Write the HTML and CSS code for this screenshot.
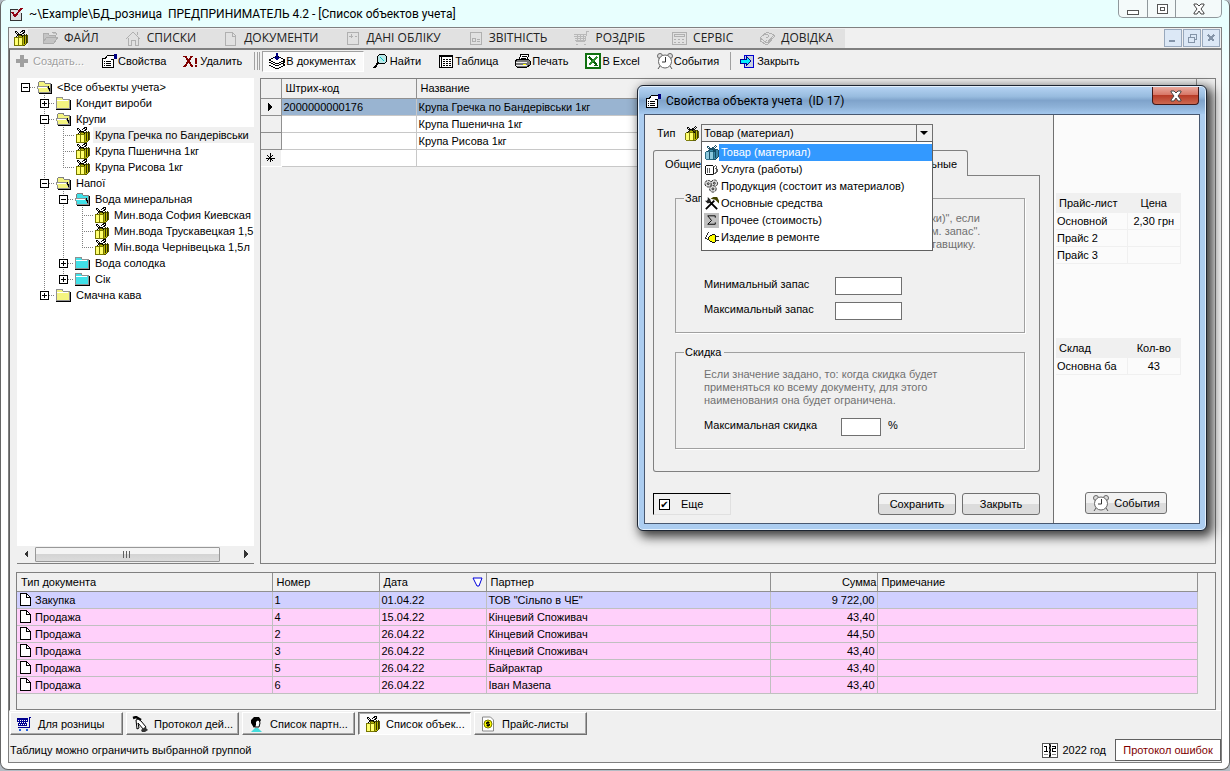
FILE: index.html
```html
<!DOCTYPE html>
<html lang="ru">
<head>
    <meta charset="UTF-8">
    <meta name="viewport" content="width=device-width, initial-scale=1.0">
    <title>ПРЕДПРИНИМАТЕЛЬ 4.2 - [Список объектов учета]</title>
    <link rel="stylesheet" href="styles.css">
</head>
<body>
    <!-- иконки -->
    <svg class="sprite" aria-hidden="true">
        <symbol id="app" viewBox="0 0 14 14">
            <path d="M1 2h11v11H1z" fill="#ddd"/><path d="M1 13V2h8M1 13h11V6" fill="none" stroke="#333"/>
            <path d="M3 5l3 4 7-8" fill="none" stroke="#900010" stroke-width="2"/>
        </symbol>
        <symbol id="gift" viewBox="0 0 16 16">
            <path d="M6 5h9v8l-2 2H6z" fill="#b8b800" stroke="#555500"/>
            <path d="M2 7h8v8H2z" fill="#ffff70" stroke="#777700"/>
            <path d="M10 7l3-3M12 5v9M14 4v9" stroke="#333300" fill="none"/>
            <path d="M6 7v8" stroke="#777700" stroke-width="1"/>
            <path d="M7 4L4 1 3 2l2 2h5l3-2-1-2-4 3M7 4L4 7M8 4l3 3" fill="none" stroke="#000"/>
        </symbol>
        <symbol id="gift-blue" viewBox="0 0 16 16">
            <path d="M6 5h9v8l-2 2H6z" fill="#3a88a8" stroke="#104860"/>
            <path d="M2 7h8v8H2z" fill="#8cc8dc" stroke="#206880"/>
            <path d="M10 7l3-3M12 5v9M6 7v8" stroke="#104860" fill="none"/>
            <path d="M7 4L4 1 3 2l2 2h5l3-2-1-2-4 3M7 4L4 7M8 4l3 3" fill="none" stroke="#104860"/>
        </symbol>
        <symbol id="folder" viewBox="0 0 16 14">
            <path d="M1 13h14M15 4v10" fill="none" stroke="#000"/>
            <path d="M1 12V3l1-2h5l1 2h6v9z" fill="currentColor" stroke="#909090"/><path d="M2 4h11" stroke="#fff"/>
        </symbol>
        <symbol id="folder-open" viewBox="0 0 16 14">
            <path d="M3 13h12M15 4v10" fill="none" stroke="#000"/>
            <path d="M2 12V3l2-2h4l1 2h5v9z" fill="currentColor" stroke="#808080"/>
            <path d="M3 12L1 6h10l3 6z" fill="currentColor" stroke="#909090"/><path d="M2 7h9" fill="none" stroke="#fff"/><path d="M12 6l2 5" stroke="#000"/>
        </symbol>
        <symbol id="m-file" viewBox="0 0 18 16">
            <path d="M2 12V3h5l1 2h6v3M2 12l4-5h11l-4 6H2zM11 3q4-2 5 2" fill="#c4c4c4" stroke="#adadad"/>
        </symbol>
        <symbol id="m-home" viewBox="0 0 18 16">
            <path d="M2 9l7-7 7 7M4 8v7h3v-5h4v5h3V8M13 5V2" fill="none" stroke="#b0b0b0"/>
        </symbol>
        <symbol id="m-doc" viewBox="0 0 18 16"><path d="M4 2h7l3 3v10H4zM11 2v4h3" fill="none" stroke="#b0b0b0"/></symbol>
        <symbol id="m-acc" viewBox="0 0 18 16"><path d="M4 2h11v12H4zM6 6h4M12 6h2M8 4v4" fill="none" stroke="#b0b0b0"/></symbol>
        <symbol id="m-rep" viewBox="0 0 18 16"><path d="M4 2h11v12H4zM6 8h3v3H6zM11 9h3M11 11h3" fill="none" stroke="#b0b0b0"/></symbol>
        <symbol id="m-cart" viewBox="0 0 18 16"><path d="M2 4h12M2 6h12M3 8h11M3 10h10M5 4v7M8 4v7M11 4v7M17 1h-2l-2 10H4M4 14h2M12 14h2" fill="none" stroke="#b8b8b8"/></symbol>
        <symbol id="m-calc" viewBox="0 0 18 16"><path d="M2 2h14v12H2zM4 4h10v2H4zM4 9h2M8 9h2M12 9h2M4 12h2M8 12h2M12 12h2" fill="none" stroke="#b0b0b0"/></symbol>
        <symbol id="m-help" viewBox="0 0 18 16"><path d="M2 8l7-6 7 3-7 8zM2 8v3l7 4 7-8V5M7 5q4-1 3 2l-2 1M8 10h1" fill="none" stroke="#b0b0b0"/></symbol>
        <symbol id="plus" viewBox="0 0 18 18"><path d="M5 3h4v4h4v4H9v4H5v-4H1V7h4z" fill="#a0a0a0"/></symbol>
        <symbol id="props" viewBox="0 0 18 18">
            <path d="M2 6h11v9H2z" fill="#fff" stroke="#000"/><path d="M4 9h1M6 9h5M4 11h1M6 11h5M4 13h1M6 13h5" stroke="#000"/>
            <path d="M5 7l3-4h3l3 1v3l-3 1" fill="#fff" stroke="#000"/><path d="M14 2h3v5h-3z" fill="#000080"/>
        </symbol>
        <symbol id="del" viewBox="0 0 18 18">
            <path d="M3 4l7 10M10 4L3 14" stroke="#800000" stroke-width="2"/><path d="M1 4h3M8 4h3M1 14h3M9 14h2" stroke="#800000"/><path d="M13 6h2v6h-2zM13 13h2v2h-2z" fill="#800000"/>
        </symbol>
        <symbol id="stack" viewBox="0 0 18 18">
            <path d="M1 13l8 4 8-4-3-2M1 10l8 4 8-4-3-2" fill="#fff" stroke="#000"/><path d="M1 8l8-4 8 4-8 4z" fill="#fff" stroke="#000"/>
            <path d="M8 1h2v4h2l-3 4-3-4h2z" fill="#000080"/>
        </symbol>
        <symbol id="find" viewBox="0 0 18 18"><path d="M7 10l-5 6" stroke="#000" stroke-width="2"/><circle cx="10" cy="7" r="5" fill="#b8e8e8" stroke="#000"/><path d="M8 5l4 4" stroke="#0cc"/></symbol>
        <symbol id="grid" viewBox="0 0 18 18">
            <path d="M2 3h13v12H2z" fill="#fff" stroke="#000"/><path d="M2 4h13M4 3v12" stroke="#000" stroke-width="1"/><path d="M6 7h8M6 9h8M6 11h8M6 13h8" stroke="#000" stroke-dasharray="2 1"/>
        </symbol>
        <symbol id="print" viewBox="0 0 18 18">
            <path d="M5 8l2-6h8l-2 6z" fill="#fff" stroke="#000"/><path d="M8 4h5M7 6h5" stroke="#000"/>
            <path d="M1 9l3-2h10l2 2v4l-3 2H3l-2-2z" fill="#777" stroke="#000"/><path d="M2 10h11M2 13h11" stroke="#eee"/><path d="M9 12h3" stroke="#ff0"/>
        </symbol>
        <symbol id="xls" viewBox="0 0 18 18">
            <path d="M2 2h14v14H2z" fill="#fff" stroke="#107010" stroke-width="2"/><path d="M5 5l8 8" stroke="#0a5c0a" stroke-width="2"/><path d="M13 5l-8 8" stroke="#309030" stroke-width="2"/><path d="M10 13h4M4 5h3" stroke="#107010"/>
        </symbol>
        <symbol id="clock" viewBox="0 0 18 18">
            <g shape-rendering="auto"><circle cx="4" cy="4" r="2.5" fill="#ddd" stroke="#666"/><circle cx="14" cy="4" r="2.5" fill="#ddd" stroke="#666"/><path d="M4 14l-2 3M14 14l2 3" stroke="#555"/>
            <circle cx="9" cy="9.500" r="6.500" fill="#fff" stroke="#666"/><path d="M9.500 5v5H6" fill="none" stroke="#333"/></g>
        </symbol>
        <symbol id="exit" viewBox="0 0 18 18"><path d="M5 3h9v12H5z" fill="#c8d0e0" stroke="#0000d0" stroke-width="1"/><path d="M1 7h6V4l5 5-5 5v-3H1z" fill="#0ef" stroke="#000090"/></symbol>
        <symbol id="mug" viewBox="0 0 16 16"><path d="M2 4h8v9H2z" fill="#fff" stroke="#000"/><path d="M10 5l3-1v8l-3 1M12 7h2v4h-2M4 6v6M6 6v6" fill="none" stroke="#555"/></symbol>
        <symbol id="gears" viewBox="0 0 16 16"><g shape-rendering="auto" fill="#ddd" stroke="#222"><circle cx="4.500" cy="5" r="3.500" stroke-dasharray="3 1"/><circle cx="11" cy="4.500" r="3.500" stroke-dasharray="3 1"/><circle cx="9.500" cy="10.500" r="3.500" stroke-dasharray="3 1"/><circle cx="4.500" cy="5" r="1"/><circle cx="11" cy="4.500" r="1"/><circle cx="9.500" cy="10.500" r="1"/></g></symbol>
        <symbol id="tools" viewBox="0 0 16 16"><g shape-rendering="auto"><path d="M4 4l10 10M11 5L2 14" stroke="#000" stroke-width="2"/><path d="M1 5h3V1l3 3v3L4 8z" fill="#222"/><path d="M7 3l3-2h4l2 4v3l-4-4z" fill="#444400"/></g></symbol>
        <symbol id="sigma" viewBox="0 0 16 16"><path d="M0 0h16v16H0z" fill="#c0c0c0"/><path d="M12 5V3H4l4 5-4 4h8v-2" fill="none" stroke="#000" shape-rendering="auto"/></symbol>
        <symbol id="plug" viewBox="0 0 16 16"><path d="M5 7l4-2h3v8H9l-4-2z" fill="#ff0" stroke="#000"/><path d="M12 7h4M12 11h4M5 10L1 9l4-7" fill="none" stroke="#222"/></symbol>
        <symbol id="sheet" viewBox="0 0 12 14"><path d="M1 1h6l4 4v8H1z" fill="#fff" stroke="#000"/><path d="M7 1v4h4" fill="none" stroke="#000"/></symbol>
        <symbol id="cart" viewBox="0 0 16 16"><path d="M1 2h11l-1 8H2z" fill="#000090"/><path d="M2 4h9M2 6h9M3 8h8" stroke="#fff" stroke-dasharray="1 1"/><path d="M15 1h-2v10H2" fill="none" stroke="#000090"/><path d="M3 13h2v2H3zM10 13h2v2h-2z" fill="#2060e0"/></symbol>
        <symbol id="hand" viewBox="0 0 16 16"><g shape-rendering="auto"><path d="M1 2l3-1 5 3" stroke="#000" stroke-width="2.500"/><path d="M4 4l1 9 2-1-1-5 6 7 2-3-5-6-3-2z" fill="#fff" stroke="#000"/><path d="M9 14l4-3 3 3-3 2h-3z" fill="#333"/></g></symbol>
        <symbol id="person" viewBox="0 0 16 16"><g shape-rendering="auto"><path d="M3 16l4-4h3l4 4z" fill="#4dd"/><path d="M6 4h5l1 3-1 4H7z" fill="#fff" stroke="#000"/><path d="M3 4l3-3h5l2 3-1 2-2-2-2 2v3l-2 3-3-5z" fill="#000"/></g></symbol>
        <symbol id="price" viewBox="0 0 16 16"><g shape-rendering="auto"><path d="M2.500 1h8l3 3v11h-11z" fill="#fff" stroke="#888"/><circle cx="8" cy="8" r="4" fill="#ff0" stroke="#770"/><path d="M9.500 6.500h-3V8h3v1.500h-3M8 5v6" fill="none" stroke="#000"/></g></symbol>
        <symbol id="cal" viewBox="0 0 16 15"><path d="M0 0h16v15H0z" fill="#555"/><path d="M1 1h6v13H1zM9 1h6v13H9z" fill="#fff"/><path d="M2 3h2v5M2 8h4M10 3h3v2h-3v3h4M7 1l2 2-2 2 2 2-2 2 2 2-2 3" fill="none" stroke="#000"/><path d="M2 11h4M10 11h4" stroke="#888"/></symbol>
        <symbol id="cross" viewBox="0 0 12 12"><path d="M1 1h3l2 2 2-2h3v1L8 6l3 4v1H8L6 8l-2 3H1v-1l3-4-3-4z" fill="#fff" stroke="#444" shape-rendering="auto"/></symbol>
    </svg>

    <div class="window">
        <header class="titlebar">
            <svg class="app-icon"><use href="#app"/></svg>
            <h1>~\Example\БД_розница&nbsp; ПРЕДПРИНИМАТЕЛЬ 4.2 - [Список объектов учета]</h1>
            <div class="win-controls">
                <button type="button" aria-label="Свернуть"><svg viewBox="0 0 12 12"><path d="M0 7h11v4H0z" fill="#fff" stroke="#555"/></svg></button>
                <button type="button" aria-label="Развернуть"><svg viewBox="0 0 12 12"><path d="M1 1h10v9H1zM4 4h4v3H4z" fill="#fff" stroke="#555"/></svg></button>
                <button type="button" class="wide" aria-label="Закрыть окно"><svg><use href="#cross"/></svg></button>
            </div>
        </header>

        <div class="frame">
            <nav class="menubar">
                <svg class="icon"><use href="#gift"/></svg>
                <div class="menu">
                    <button type="button"><svg><use href="#m-file"/></svg>ФАЙЛ</button>
                    <button type="button"><svg><use href="#m-home"/></svg>СПИСКИ</button>
                    <button type="button"><svg><use href="#m-doc"/></svg>ДОКУМЕНТИ</button>
                    <button type="button"><svg><use href="#m-acc"/></svg>ДАНІ ОБЛІКУ</button>
                    <button type="button"><svg><use href="#m-rep"/></svg>ЗВІТНІСТЬ</button>
                    <button type="button"><svg><use href="#m-cart"/></svg>РОЗДРІБ</button>
                    <button type="button"><svg><use href="#m-calc"/></svg>СЕРВІС</button>
                    <button type="button"><svg><use href="#m-help"/></svg>ДОВІДКА</button>
                </div>
                <div class="mdi-controls">
                    <button type="button" aria-label="Свернуть форму"><svg viewBox="0 0 12 12"><path d="M2 9h6" stroke="#8494a8" stroke-width="2"/></svg></button>
                    <button type="button" aria-label="Восстановить форму"><svg viewBox="0 0 12 12"><path d="M2 5h6v5H2zM4 5V2h6v5H8" fill="none" stroke="#8494a8"/></svg></button>
                    <button type="button" aria-label="Закрыть форму"><svg viewBox="0 0 12 12"><path d="M3 3l6 6M9 3l-6 6" stroke="#8494a8" stroke-width="2"/></svg></button>
                </div>
            </nav>

            <main class="client">
                <div class="toolbar">
                    <button type="button" disabled><svg><use href="#plus"/></svg>Создать...</button>
                    <button type="button"><svg><use href="#props"/></svg>Свойства</button>
                    <button type="button"><svg><use href="#del"/></svg>Удалить</button>
                    <span class="grip"></span>
                    <button type="button" class="pressed" aria-pressed="true"><svg><use href="#stack"/></svg>В документах</button>
                    <button type="button"><svg><use href="#find"/></svg>Найти</button>
                    <button type="button"><svg><use href="#grid"/></svg>Таблица</button>
                    <button type="button"><svg><use href="#print"/></svg>Печать</button>
                    <button type="button"><svg><use href="#xls"/></svg>В Excel</button>
                    <button type="button"><svg><use href="#clock"/></svg>События</button>
                    <span class="sep"></span>
                    <button type="button"><svg><use href="#exit"/></svg>Закрыть</button>
                </div>

                <div class="panes">
                    <div class="tree-pane">
                        <div class="tree">
                            <ul class="root">
                                <li>
                                    <div class="node"><button type="button" class="twist" aria-label="Свернуть"></button><i></i><svg class="yellow"><use href="#folder-open"/></svg><span>&lt;Все объекты учета&gt;</span></div>
                                    <ul>
                                        <li><div class="node"><button type="button" class="twist closed" aria-label="Развернуть"></button><i></i><svg class="yellow"><use href="#folder"/></svg><span>Кондит вироби</span></div></li>
                                        <li>
                                            <div class="node"><button type="button" class="twist" aria-label="Свернуть"></button><i></i><svg class="yellow"><use href="#folder-open"/></svg><span>Крупи</span></div>
                                            <ul>
                                                <li><div class="node leaf"><i></i><svg><use href="#gift"/></svg><span class="selected">Крупа Гречка по Бандерівськи</span></div></li>
                                                <li><div class="node leaf"><i></i><svg><use href="#gift"/></svg><span>Крупа Пшенична 1кг</span></div></li>
                                                <li><div class="node leaf"><i></i><svg><use href="#gift"/></svg><span>Крупа Рисова 1кг</span></div></li>
                                            </ul>
                                        </li>
                                        <li>
                                            <div class="node"><button type="button" class="twist" aria-label="Свернуть"></button><i></i><svg class="yellow"><use href="#folder-open"/></svg><span>Напої</span></div>
                                            <ul>
                                                <li>
                                                    <div class="node"><button type="button" class="twist" aria-label="Свернуть"></button><i></i><svg class="cyan"><use href="#folder-open"/></svg><span>Вода минеральная</span></div>
                                                    <ul>
                                                        <li><div class="node leaf"><i></i><svg><use href="#gift"/></svg><span>Мин.вода София Киевская</span></div></li>
                                                        <li><div class="node leaf"><i></i><svg><use href="#gift"/></svg><span>Мин.вода Трускавецкая 1,5</span></div></li>
                                                        <li><div class="node leaf"><i></i><svg><use href="#gift"/></svg><span>Мін.вода Чернівецька 1,5л</span></div></li>
                                                    </ul>
                                                </li>
                                                <li><div class="node"><button type="button" class="twist closed" aria-label="Развернуть"></button><i></i><svg class="cyan"><use href="#folder"/></svg><span>Вода солодка</span></div></li>
                                                <li><div class="node"><button type="button" class="twist closed" aria-label="Развернуть"></button><i></i><svg class="cyan"><use href="#folder"/></svg><span>Сік</span></div></li>
                                            </ul>
                                        </li>
                                        <li><div class="node"><button type="button" class="twist closed" aria-label="Развернуть"></button><i></i><svg class="yellow"><use href="#folder"/></svg><span>Смачна кава</span></div></li>
                                    </ul>
                                </li>
                            </ul>
                        </div>
                        <div class="scrollbar">
                            <button type="button" aria-label="Влево"><svg viewBox="0 0 8 8"><path d="M6 0v8L2 4z" fill="#333"/></svg></button>
                            <div class="track"><div class="thumb"></div></div>
                            <button type="button" aria-label="Вправо"><svg viewBox="0 0 8 8"><path d="M2 0v8l4-4z" fill="#333"/></svg></button>
                        </div>
                    </div>

                    <div class="items-pane">
                        <table class="items">
                            <colgroup><col class="c-mark"><col class="c-code"><col></colgroup>
                            <thead><tr><th></th><th>Штрих-код</th><th>Название</th></tr></thead>
                            <tbody>
                                <tr class="current"><th><svg viewBox="0 0 10 10"><path d="M3 1v9l4-5z"/></svg></th><td>2000000000176</td><td>Крупа Гречка по Бандерівськи 1кг</td></tr>
                                <tr><th></th><td></td><td>Крупа Пшенична 1кг</td></tr>
                                <tr><th></th><td></td><td>Крупа Рисова 1кг</td></tr>
                                <tr class="new"><th><svg viewBox="0 0 10 10"><path d="M5 0v9M1 5h9M2 2l6 6M8 2L2 8" stroke="#000"/></svg></th><td></td><td></td></tr>
                            </tbody>
                        </table>
                    </div>
                </div>

                <div class="docs-pane">
                    <table class="docs">
                        <colgroup><col class="d-type"><col class="d-num"><col class="d-num"><col class="d-partner"><col class="d-num"><col></colgroup>
                        <thead>
                            <tr><th>Тип документа</th><th>Номер</th><th><div class="sorted">Дата<svg viewBox="0 0 12 10"><path d="M1 1h9L7 9H5z" fill="#fff" stroke="#00d" shape-rendering="auto"/></svg></div></th><th>Партнер</th><th class="sum">Сумма</th><th>Примечание</th></tr>
                        </thead>
                        <tbody>
                            <tr class="buy"><td><svg><use href="#sheet"/></svg>Закупка</td><td>1</td><td>01.04.22</td><td>ТОВ "Сільпо в ЧЕ"</td><td class="sum">9 722,00</td><td></td></tr>
                            <tr><td><svg><use href="#sheet"/></svg>Продажа</td><td>4</td><td>15.04.22</td><td>Кінцевий Споживач</td><td class="sum">43,40</td><td></td></tr>
                            <tr><td><svg><use href="#sheet"/></svg>Продажа</td><td>2</td><td>26.04.22</td><td>Кінцевий Споживач</td><td class="sum">44,50</td><td></td></tr>
                            <tr><td><svg><use href="#sheet"/></svg>Продажа</td><td>3</td><td>26.04.22</td><td>Кінцевий Споживач</td><td class="sum">43,40</td><td></td></tr>
                            <tr><td><svg><use href="#sheet"/></svg>Продажа</td><td>5</td><td>26.04.22</td><td>Байрактар</td><td class="sum">43,40</td><td></td></tr>
                            <tr><td><svg><use href="#sheet"/></svg>Продажа</td><td>6</td><td>26.04.22</td><td>Іван Мазепа</td><td class="sum">43,40</td><td></td></tr>
                        </tbody>
                    </table>
                </div>
            </main>

            <div class="tasks">
                <button type="button"><svg><use href="#cart"/></svg>Для розницы</button>
                <button type="button"><svg><use href="#hand"/></svg>Протокол дей...</button>
                <button type="button"><svg><use href="#person"/></svg>Список партн...</button>
                <button type="button" class="pressed"><svg><use href="#gift"/></svg>Список объек...</button>
                <button type="button"><svg><use href="#price"/></svg>Прайс-листы</button>
            </div>
            <footer class="status">
                <span class="hint">Таблицу можно ограничить выбранной группой</span>
                <svg><use href="#cal"/></svg>
                <span>2022 год</span>
                <button type="button">Протокол ошибок</button>
            </footer>
        </div>
    </div>

    <!-- свойства объекта -->
    <div class="dialog" role="dialog" aria-labelledby="dlgTitle">
        <div class="dialog-title">
            <svg><use href="#props"/></svg>
            <h2 id="dlgTitle">Свойства объекта учета&nbsp; (ID 17)</h2>
            <button type="button" aria-label="Закрыть"><svg><use href="#cross"/></svg></button>
        </div>
        <div class="dialog-body">
            <form class="dialog-main">
                <div class="type-row">
                    <label for="kind">Тип</label>
                    <svg><use href="#gift"/></svg>
                    <div class="combo">
                        <select id="kind"><option>Товар (материал)</option></select>
                        <ul class="options">
                            <li class="active"><svg><use href="#gift-blue"/></svg><span>Товар (материал)</span></li>
                            <li><svg><use href="#mug"/></svg><span>Услуга (работы)</span></li>
                            <li><svg><use href="#gears"/></svg><span>Продукция (состоит из материалов)</span></li>
                            <li><svg><use href="#tools"/></svg><span>Основные средства</span></li>
                            <li><svg><use href="#sigma"/></svg><span>Прочее (стоимость)</span></li>
                            <li><svg><use href="#plug"/></svg><span>Изделие в ремонте</span></li>
                        </ul>
                    </div>
                </div>
                <div class="tabs">
                    <div class="tab-list">
                        <button type="button">Общие</button>
                        <button type="button">Дополнительные</button>
                    </div>
                    <div class="tab-rest"></div>
                </div>
                <div class="tab-panel">
                    <fieldset>
                        <legend>Запас</legend>
                        <p class="note tail">ки)", если<br>м. запас".<br>тавщику.</p>
                        <div class="field"><label for="minStock">Минимальный запас</label><input type="text" id="minStock"></div>
                        <div class="field"><label for="maxStock">Максимальный запас</label><input type="text" id="maxStock"></div>
                    </fieldset>
                    <fieldset>
                        <legend>Скидка</legend>
                        <p class="note">Если значение задано, то: когда скидка будет<br>применяться ко всему документу, для этого<br>наименования она будет ограничена.</p>
                        <div class="field percent"><label for="maxDisc">Максимальная скидка</label><input type="text" id="maxDisc"><span>%</span></div>
                    </fieldset>
                </div>
                <div class="actions">
                    <label class="more"><input type="checkbox" checked>Еще</label>
                    <button type="button" class="btn">Сохранить</button>
                    <button type="button" class="btn">Закрыть</button>
                </div>
            </form>
            <aside class="dialog-side">
                <table class="mini">
                    <thead><tr><th>Прайс-лист</th><th>Цена</th></tr></thead>
                    <tbody>
                        <tr><td>Основной</td><td>2,30 грн</td></tr>
                        <tr><td>Прайс 2</td><td></td></tr>
                        <tr><td>Прайс 3</td><td></td></tr>
                    </tbody>
                </table>
                <table class="mini">
                    <thead><tr><th>Склад</th><th>Кол-во</th></tr></thead>
                    <tbody><tr><td>Основна ба</td><td>43</td></tr></tbody>
                </table>
                <button type="button" class="btn"><svg><use href="#clock"/></svg>События</button>
            </aside>
        </div>
    </div>
</body>
</html>
```

FILE: styles.css
```css
* { margin: 0; padding: 0; box-sizing: border-box; }
body {
    font: 11px/16px "Liberation Sans", Arial, sans-serif;
    color: #000; background: #b4bcc4; min-height: 100vh;
    display: flex; flex-direction: column; padding-bottom: 1px;
}
button, input, select { font: inherit; color: inherit; border-radius: 0; }
button { background: none; border: none; white-space: nowrap; }
ul { list-style: none; }
svg { display: block; flex: none; shape-rendering: crispEdges; fill: none; }
.sprite { position: absolute; width: 0; height: 0; }

/* главное окно */
.window {
    flex: 1; display: flex; flex-direction: column; padding: 0 7px 6px;
    border: 1px solid #666; border-top: none; border-radius: 6px 6px 8px 8px;
    background: linear-gradient(#e8fffe 0 28px, #f2ffff 60px, #fff 160px);
}
.titlebar { height: 27px; display: flex; align-items: center; gap: 6px; }
.app-icon { width: 14px; height: 14px; margin-left: 1px; }
.titlebar h1 { font: 12px/18px Roboto, "Open Sans", sans-serif; white-space: pre; }
.win-controls {
    margin-left: auto; align-self: flex-start; display: flex;
    border: 1px solid #90989c; border-top: none; border-radius: 0 0 5px 5px; background: #f4fafa;
}
.win-controls button { width: 28px; height: 17px; display: flex; align-items: center; justify-content: center; }
.win-controls button + button { border-left: 1px solid #90989c; }
.win-controls .wide { width: 46px; }
.win-controls svg { width: 12px; height: 12px; }

.frame { flex: 1; display: flex; flex-direction: column; border: 1px solid #808080; background: #f0f0f0; }
.menubar { display: flex; align-items: center; height: 20px; padding: 0 1px 0 3px; }
.menubar .icon { width: 16px; height: 16px; }
.menu { display: flex; height: 19px; background: #e1e1e1; }
.menu button {
    display: flex; align-items: center; gap: 5px; padding: 0 12px 0 13px;
    font: 12px/18px "Open Sans", "Noto Sans", sans-serif; color: #222;
}
.menu svg { width: 18px; height: 16px; }
.mdi-controls { margin-left: auto; display: flex; gap: 1px; }
.mdi-controls button {
    width: 18px; height: 18px; display: flex; align-items: center; justify-content: center;
    border: 1px solid #98a8bc; background: #dce8f6;
}
.mdi-controls svg { width: 12px; height: 12px; }

.client {
    flex: 1; display: flex; flex-direction: column; padding: 0 5px 0 7px;
    border-left: 1px solid #606060; border-top: 2px solid #808080; border-bottom: 1px solid #fff;
}
.toolbar { display: flex; align-items: center; height: 28px; padding-bottom: 6px; margin-left: -10px; }
.toolbar button { display: flex; align-items: center; height: 21px; padding: 0 8px; }
.toolbar button:disabled { color: #a0a0a0; text-shadow: 1px 1px #fff; }
.toolbar svg { width: 18px; height: 18px; }
.toolbar .pressed { background: #fafafa; border: 1px solid #fff; border-top-color: #a0a0a0; border-left-color: #a0a0a0; padding: 0 7px 0 5px; }
.grip { width: 6px; height: 18px; margin: 0 2px 0 4px; border: solid #a0a0a0; border-width: 0 1px; }
.grip::before { content: ""; display: block; width: 1px; height: 18px; margin-left: 2px; background: #a0a0a0; }
.sep { width: 1px; height: 18px; margin: 0 0 0 3px; background: #a0a0a0; }

.panes { flex: 1; display: flex; gap: 6px; }
.tree-pane { width: 237px; display: flex; flex-direction: column; border-bottom: 1px solid #808080; background: #fff; }
.tree { flex: 1; overflow: hidden; padding: 1px 0 0 4px; }
.tree ul ul {
    margin-left: 19px;
    background: repeating-linear-gradient(#808080 0 1px, transparent 1px 2px) 4px 0 / 1px calc(100% - 8px) no-repeat;
}
.node { display: flex; align-items: center; height: 16px; white-space: nowrap; }
.node i { width: 6px; height: 1px; background: repeating-linear-gradient(90deg, #808080 0 1px, transparent 1px 2px); }
.leaf i { width: 11px; margin-left: 4px; }
.node svg { width: 16px; height: 16px; margin-right: 3px; }
.node span { padding-left: 2px; }
.node .selected { flex: 1; background: #f0f0f0; }
.twist {
    width: 9px; height: 9px; border: 1px solid #000;
    background: linear-gradient(#000, #000) center / 5px 1px no-repeat, #fff;
}
.twist.closed {
    background: linear-gradient(#000, #000) center / 5px 1px no-repeat,
        linear-gradient(#000, #000) center / 1px 5px no-repeat, #fff;
}
.yellow { color: #f4f480; }
.cyan { color: #40e0e8; }

.scrollbar { display: flex; height: 17px; background: #f0f0f0; }
.scrollbar button { width: 17px; display: flex; align-items: center; justify-content: center; }
.scrollbar svg { width: 8px; height: 8px; }
.track { flex: 1; display: flex; padding: 1px; }
.thumb {
    width: 92%; border: 1px solid #989898; border-radius: 1px;
    background: repeating-linear-gradient(90deg, #606060 0 1px, transparent 1px 3px) center / 9px 7px no-repeat,
        linear-gradient(#f4f4f4 50%, #d4d4d4 50%, #dcdcdc);
}

table { border-collapse: collapse; }
.items-pane { flex: 1; border: 1px solid #808080; padding-right: 18px; }
.items { width: 100%; table-layout: fixed; background: #fff; }
.items th, .items td { height: 17px; line-height: 16px; text-align: left; font-weight: normal; padding: 0 2px; border: 1px solid #c8c8c8; border-top: none; }
.items th { background: #f0f0f0; border-left: none; }
.items tbody th { border-color: #909090; }
.items thead th { height: 19px; line-height: 18px; padding-left: 4px; border-color: #909090; }
.items .current td { background: #99b4d1; }
.items .new th { border-color: transparent; }
.items svg { width: 10px; height: 10px; margin: 0 0 0 2px; }
.items path { fill: #000; }
.c-mark { width: 20px; }
.c-code { width: 135px; }

.docs-pane { margin-top: 8px; border: 1px solid #808080; padding-bottom: 15px; margin-left: -1px; }
.docs { width: calc(100% - 17px); table-layout: fixed; }
.docs th, .docs td { height: 17px; line-height: 16px; font-weight: normal; text-align: left; padding: 0 2px; border: 1px solid #c0c0c0; border-left: none; }
.docs thead th { height: 19px; line-height: 18px; padding-left: 4px; border-color: #909090; border-top: none; }
.docs td { background: #ffd0fa; }
.docs .buy td { background: #d0d0ff; }
.docs .sum { text-align: right; }
.docs thead .sum { padding-right: 0; }
.docs td svg { width: 12px; height: 14px; float: left; margin: 0 4px 0 0; }
.sorted { display: flex; justify-content: space-between; align-items: center; }
.sorted svg { width: 12px; height: 10px; }
.d-type { width: 255px; }
.d-num { width: 107px; }
.d-partner { width: 284px; }

/* кнопки окон и строка состояния */
.tasks { display: flex; gap: 3px; padding: 1px; }
.tasks button {
    width: 113px; height: 23px; display: flex; align-items: center; gap: 6px; padding-left: 5px;
    border: 1px solid; border-color: #fff #707070 #707070 #fff; box-shadow: inset -1px -1px #a8a8a8;
}
.tasks svg { width: 16px; height: 16px; }
.tasks .pressed { background: #fafafa; border-color: #707070 #fff #fff #707070; box-shadow: inset 1px 1px #a8a8a8; }
.status { display: flex; align-items: center; gap: 4px; height: 26px; padding: 2px 0 0 1px; }
.status .hint { margin-right: auto; }
.status svg { width: 16px; height: 15px; }
.status button { height: 22px; width: 106px; margin-left: 5px; background: #fff; border: 1px solid #606060; color: #800000; }

/* диалог */
.dialog {
    position: absolute; left: 637px; top: 85px; width: 570px; padding: 0 6px 6px;
    border: 1px solid #1c2430; border-radius: 6px; background: #accdf0;
    box-shadow: inset 0 0 0 1px #e4f0fc, 4px 4px 11px 2px rgba(0,0,0,.75);
}
.dialog-title {
    display: flex; align-items: center; gap: 4px; height: 27px; margin: 1px -5px 0; padding: 0 5px;
    background: linear-gradient(#b4d2f2, #98bcdf 35%, #7fa3cb 50%, #8eb2d8 75%, #a4c8ee); border-radius: 5px 5px 0 0;
}
.dialog-title svg { width: 18px; height: 18px; }
.dialog-title h2 { font: 12px/16px Roboto, "Open Sans", sans-serif; flex: 1; }
.dialog-title button {
    align-self: flex-start; width: 47px; height: 18px; display: flex; align-items: center; justify-content: center;
    border: 1px solid #401818; border-top: none; border-radius: 0 0 4px 4px; margin-right: 1px;
    background: linear-gradient(#eaa89c, #d87868 45%, #b83c28 50%, #cc6850);
}
.dialog-title button svg { width: 12px; height: 12px; }
.dialog-body { display: flex; border: 1px solid #485870; background: #f0f0f0; }
.dialog-main { flex: 1; padding: 9px 13px 8px 8px; }
.type-row { display: flex; align-items: center; height: 18px; padding-left: 4px; }
.type-row label { width: 27px; }
.type-row svg { width: 15px; height: 15px; }
.combo { position: relative; width: 232px; margin-left: 2px; }
.combo select {
    display: block; width: 100%; height: 18px; padding-left: 2px; appearance: none; border: 1px solid #707070;
    background: linear-gradient(#707070, #707070) 214px 0 / 1px 100% no-repeat, #f0f0f0;
}
.combo::after {
    content: ""; position: absolute; right: 5px; top: 7px; pointer-events: none;
    border: 4px solid transparent; border-top-color: #000; border-bottom: none;
}
.options {
    position: absolute; z-index: 1; left: 0; top: 17px; width: 232px; padding: 2px 0 4px;
    background: #fff; border: 1px solid #606060;
}
.options li { display: flex; align-items: center; height: 17px; padding-left: 2px; }
.options span { flex: 1; padding-left: 2px; line-height: 17px; }
.options .active span { background: #3399ff; color: #fff; }
.tabs { display: flex; margin-top: 8px; height: 26px; }
.tab-list {
    width: 315px; display: flex; justify-content: space-between; padding: 0 10px 0 11px;
    border: 1px solid #808080; border-bottom: none; border-radius: 3px 3px 0 0;
}
.tab-rest { flex: 1; border-bottom: 1px solid #808080; }
.tab-panel { padding: 14px 14px 22px 21px; border: 1px solid #808080; border-top: none; border-radius: 0 0 3px 3px; }
fieldset { border: 1px solid #a0a0a0; box-shadow: 1px 1px #fff; padding: 0 0 6px 28px; }
legend { margin-left: -20px; padding: 0 2px 0 1px; }
.note { color: #707070; line-height: 13px; padding: 6px 0 14px; }
.tail { padding: 6px 0 25px 227px; white-space: nowrap; }
.field { display: flex; align-items: flex-start; height: 25px; }
.field label { width: 131px; }
.field input { width: 67px; height: 18px; margin-top: 1px; background: #fff; border: 1px solid #707070; }
fieldset + fieldset { margin-top: 11px; }
fieldset + fieldset .note { padding: 8px 0 10px; }
.percent label { width: 137px; }
.percent input { width: 40px; }
.percent span { margin-left: 7px; }
.actions { display: flex; gap: 6px; margin-top: 21px; }
.more {
    width: 78px; display: flex; align-items: center; gap: 11px; padding-left: 5px; margin-right: auto;
    border: 1px solid; border-color: #000 #e0e0e0 #e0e0e0 #000;
}
.more input {
    appearance: none; width: 11px; height: 11px; border: 1px solid #000; background: #fff;
    display: flex; align-items: center; justify-content: center;
}
.more input:checked::before { content: "✔"; font: 10px/9px "DejaVu Sans", sans-serif; }
.btn {
    width: 78px; height: 22px; display: flex; align-items: center; justify-content: center; gap: 4px;
    border: 1px solid #707070; border-radius: 3px; background: linear-gradient(#f2f2f2 50%, #dcdcdc 50%);
}
.dialog-side {
    width: 146px; display: flex; flex-direction: column; padding: 78px 0 9px 2px;
    background: #fbfbfb; border-left: 1px solid #707070;
}
.mini { width: 125px; margin-bottom: 74px; table-layout: fixed; }
.mini th, .mini td { height: 17px; line-height: 16px; font-weight: normal; text-align: left; padding: 0 1px; border: 1px solid #f0f0f0; border-left: none; white-space: nowrap; }
.mini th { height: 19px; background: #f0f0f0; padding: 0 3px; }
.mini th:first-child { width: 71px; }
.mini th + th, .mini td + td { text-align: center; }
.dialog-side .btn { width: 82px; margin: auto 0 0 29px; }
.dialog-side .btn svg { width: 18px; height: 18px; }
```
